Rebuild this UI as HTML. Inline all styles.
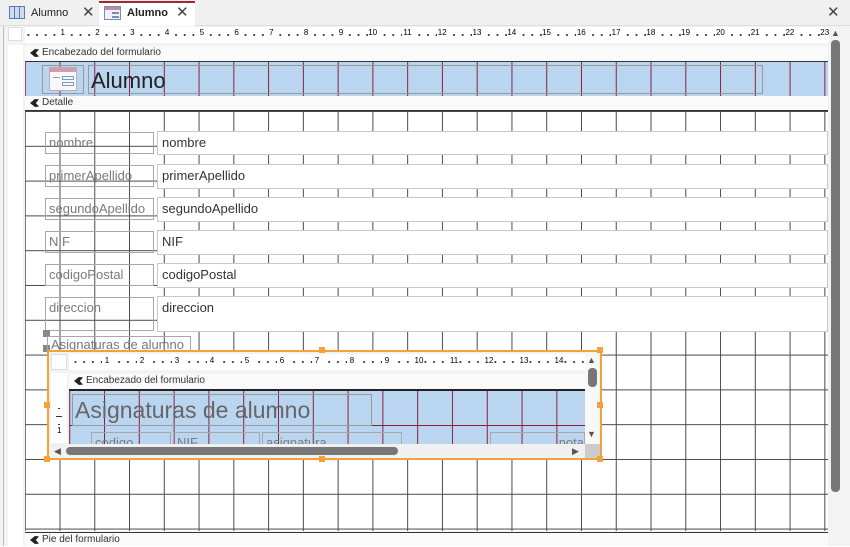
<!DOCTYPE html>
<html><head><meta charset="utf-8"><style>
*{margin:0;padding:0;box-sizing:border-box}
body{width:850px;height:546px;overflow:hidden;background:#fff;font-family:"Liberation Sans",sans-serif;position:relative}
.a{position:absolute}
.tab{font-size:11px;color:#222}
.bar{background:#fafafa;font-size:10px;color:#333;padding-left:17px;line-height:14px}
.bar:before{content:"";position:absolute;left:5px;top:3px;width:9px;height:8px;background:#222;clip-path:polygon(0 50%,55% 0,100% 5%,65% 50%,100% 95%,55% 100%)}
.lbl{border:1px solid #a8a8a8;font-size:13px;color:#7a7a7a;padding-left:3px;line-height:20px;background:transparent}
.tb{border:1px solid #c8c8c8;background:#fff;font-size:13px;color:#333;padding-left:4px;line-height:22px}
.h{position:absolute;width:6px;height:6px;background:#f5a13a}
</style></head><body>
<div class="a" style="left:0;top:0;width:850px;height:26px;background:#f0f0f0;border-bottom:1px solid #ddd"></div>
<div class="a" style="left:9px;top:6px;width:16px;height:13px;border:1px solid #5a7ab0;background:repeating-linear-gradient(90deg,#cfdcf0 0 4px,#5a7ab0 4px 5px),#fff"></div>
<div class="a tab" style="left:31px;top:7px">Alumno</div>
<div class="a" style="left:82px;top:3px;font-size:15px;color:#444">✕</div>
<div class="a" style="left:99px;top:1px;width:96px;height:25px;background:#fff;border-top:2px solid #a4262c"></div>
<div class="a" style="left:104px;top:6px;width:17px;height:14px;border:1px solid #7a8fb0;background:#eef2f8"><div class="a" style="left:0;top:0;width:15px;height:3px;background:#c08aa0"></div><div class="a" style="left:7px;top:5px;width:7px;height:2px;background:#7a8fb0"></div><div class="a" style="left:7px;top:9px;width:7px;height:2px;background:#7a8fb0"></div></div>
<div class="a tab" style="left:127px;top:7px;font-weight:bold">Alumno</div>
<div class="a" style="left:176px;top:3px;font-size:15px;color:#444">✕</div>
<div class="a" style="left:827px;top:3px;font-size:15px;color:#444">✕</div>
<div class="a" style="left:0;top:26px;width:850px;height:520px;background:#f3f3f3"></div>
<div class="a" style="left:8px;top:27px;width:14px;height:14px;background:#fff;border:1px solid #ddd"></div>
<div class="a" style="left:25px;top:27px;width:803px;height:16px;background:#fff;background-image:radial-gradient(circle,#333 0.8px,transparent 1.2px);background-size:8.7px 16px;background-position:-1px 0"></div>
<div id="rul"></div>
<div class="a" style="left:8px;top:45px;width:15px;height:501px;background:#fff"></div>
<div class="a bar" style="left:25px;top:46px;width:803px;height:15px">Encabezado del formulario</div>
<div class="a" style="left:25px;top:61px;width:803px;height:35px;border-top:1px solid #333;background:#b9d5f0;background-image:linear-gradient(90deg,#8b1f40 1px,transparent 1px);background-size:34.77px 35px;background-position:34.5px 0"></div>
<div class="a" style="left:42px;top:65px;width:42px;height:29px;border:1px solid #999"></div>
<div class="a" style="left:49px;top:67px;width:28px;height:24px;background:#f8f8fa;border:1px solid #b0b0c0"><div class="a" style="left:0;top:0;width:26px;height:4px;background:#d69aad"></div><div class="a" style="left:12px;top:8px;width:12px;height:4px;border:1px solid #7a9ac0"></div><div class="a" style="left:12px;top:14px;width:12px;height:4px;border:1px solid #7a9ac0"></div><div class="a" style="left:3px;top:9px;width:7px;height:1px;background:#999"></div></div>
<div class="a" style="left:88px;top:65px;width:675px;height:29px;border:1px solid #999;font-size:22px;color:#222;line-height:30px;padding-left:2px">Alumno</div>
<div class="a bar" style="left:25px;top:96px;width:803px;height:14px">Detalle</div>
<div class="a" style="left:25px;top:110px;width:803px;height:421px;border-top:1px solid #333;background:#fff;background-image:linear-gradient(90deg,#4a4a4a 1px,transparent 1px),linear-gradient(#4a4a4a 1px,transparent 1px);background-size:34.77px 34.8px;background-position:34.5px 0,0 0"></div>
<div class="a lbl" style="left:45px;top:132px;width:109px;height:22px">nombre</div>
<div class="a tb" style="left:157px;top:131px;width:671px;height:24px">nombre</div>
<div class="a lbl" style="left:45px;top:165px;width:109px;height:22px">primerApellido</div>
<div class="a tb" style="left:157px;top:164px;width:671px;height:25px">primerApellido</div>
<div class="a lbl" style="left:45px;top:198px;width:109px;height:22px">segundoApellido</div>
<div class="a tb" style="left:157px;top:197px;width:671px;height:25px">segundoApellido</div>
<div class="a lbl" style="left:45px;top:231px;width:109px;height:22px">NIF</div>
<div class="a tb" style="left:157px;top:230px;width:671px;height:25px">NIF</div>
<div class="a lbl" style="left:45px;top:264px;width:109px;height:22px">codigoPostal</div>
<div class="a tb" style="left:157px;top:263px;width:671px;height:25px">codigoPostal</div>
<div class="a lbl" style="left:45px;top:297px;width:109px;height:34px">direccion</div>
<div class="a tb" style="left:157px;top:296px;width:671px;height:36px">direccion</div>
<div class="a" style="left:43px;top:330px;width:7px;height:7px;background:#888"></div>
<div class="a" style="left:43px;top:345px;width:7px;height:7px;background:#888"></div>
<div class="a lbl" style="left:47px;top:336px;width:144px;height:17px;line-height:16px;color:#777">Asignaturas de alumno</div>
<div class="a" style="left:47px;top:350px;width:555px;height:110px;border:2px solid #f5a13a;background:#f3f3f3;overflow:hidden">
 <div class="a" style="left:2px;top:2px;width:16px;height:16px;background:#fff;border:1px solid #ddd"></div>
 <div class="a" style="left:20px;top:2px;width:516px;height:16px;background:#fff;background-image:radial-gradient(circle,#333 0.8px,transparent 1.2px);background-size:8.75px 16px;background-position:2px 0"></div>
 <div id="sr"></div>
 <div class="a" style="left:2px;top:21px;width:16px;height:70px;background:#fff"></div>
 <div class="a" style="left:9px;top:56px;width:2px;height:1px;background:#333"></div>
 <div class="a" style="left:7px;top:64px;width:6px;height:1px;background:#333"></div>
 <div class="a" style="left:9px;top:72px;width:2px;height:1px;background:#333"></div>
 <div class="a" style="left:8px;top:74px;font-size:8px">1</div>
 <div class="a bar" style="left:20px;top:22px;width:516px;height:15px">Encabezado del formulario</div>
 <div class="a" style="left:20px;top:37px;width:516px;height:56px;border-top:2px solid #222;background:#b9d5f0;background-image:linear-gradient(90deg,#8b1f40 1px,transparent 1px);background-size:34.8px 60px;background-position:35px 0"></div>
 <div class="a" style="left:20px;top:73px;width:516px;height:1px;background:#8b1f40"></div>
 <div class="a" style="left:23px;top:42px;width:300px;height:32px;border:1px solid #999;font-size:23px;color:#666;line-height:30px;padding-left:2px">Asignaturas de alumno</div>
 <div class="a lbl" style="left:42px;top:80px;width:80px;height:20px">codigo</div>
 <div class="a lbl" style="left:124px;top:80px;width:87px;height:20px">NIF</div>
 <div class="a lbl" style="left:213px;top:80px;width:140px;height:20px">asignatura</div>
 <div class="a lbl" style="left:441px;top:80px;width:95px;height:20px;text-align:right">nota</div>
 <div class="a" style="left:2px;top:92px;width:534px;height:14px;background:#f0f0f0"></div>
 <div class="a" style="left:5px;top:94px;font-size:9px;color:#555">◀</div>
 <div class="a" style="left:17px;top:95px;width:332px;height:8px;border-radius:4px;background:#777"></div>
 <div class="a" style="left:523px;top:94px;font-size:9px;color:#555">▶</div>
 <div class="a" style="left:536px;top:2px;width:15px;height:90px;background:#f8f8f8"></div>
 <div class="a" style="left:538px;top:3px;font-size:9px;color:#555">▲</div>
 <div class="a" style="left:539px;top:16px;width:9px;height:19px;border-radius:4px;background:#777"></div>
 <div class="a" style="left:538px;top:77px;font-size:9px;color:#555">▼</div>
 <div class="a" style="left:536px;top:92px;width:15px;height:14px;background:#ccc"></div>
</div>
<div class="h" style="left:319px;top:347px"></div><div class="h" style="left:597px;top:347px"></div>
<div class="h" style="left:44px;top:402px"></div><div class="h" style="left:597px;top:402px"></div>
<div class="h" style="left:44px;top:456px"></div><div class="h" style="left:319px;top:456px"></div><div class="h" style="left:597px;top:456px"></div>
<div class="a bar" style="left:25px;top:532px;width:803px;height:14px;border-top:1px solid #333">Pie del formulario</div>
<div class="a" style="left:829px;top:27px;width:13px;height:519px;background:#f3f3f3"></div>
<div class="a" style="left:831px;top:28px;font-size:9px;color:#555">▲</div>
<div class="a" style="left:831px;top:40px;width:9px;height:452px;border-radius:4px;background:#777"></div>
<div class="a" style="left:3px;top:26px;width:1px;height:520px;background:#bbb"></div>
<script>
var r=document.getElementById('rul'),h='';
for(var k=1;k<=23;k++){h+='<div class="a" style="left:'+(25+34.77*k-2-(k>9?3:0))+'px;top:28px;width:10px;height:12px;background:#fff;font-size:8px;text-align:center">'+k+'</div>';}
for(var k=1;k<=12;k++){h+='<div class="a" style="left:10px;top:'+(111+34.8*k-8)+'px;font-size:8px">'+k+'</div>';}
for(var y=0;y<12;y++){for(var j=1;j<4;j++){var yy=111+34.8*y+8.7*j;h+='<div class="a" style="left:'+(j==2?11:14)+'px;top:'+yy+'px;width:'+(j==2?7:2)+'px;height:1px;background:#333"></div>';}}
h+='<div class="a" style="left:13px;top:70px;width:2px;height:1px;background:#333"></div><div class="a" style="left:11px;top:79px;width:7px;height:1px;background:#333"></div><div class="a" style="left:13px;top:88px;width:2px;height:1px;background:#333"></div>';
r.innerHTML=h;
var s=document.getElementById('sr'),g='';
for(var k=1;k<=14;k++){g+='<div class="a" style="left:'+(20+35*k-2-(k>9?3:0))+'px;top:4px;width:10px;height:12px;background:#fff;font-size:8px;text-align:center">'+k+'</div>';}
s.innerHTML=g;
</script>
</body></html>
